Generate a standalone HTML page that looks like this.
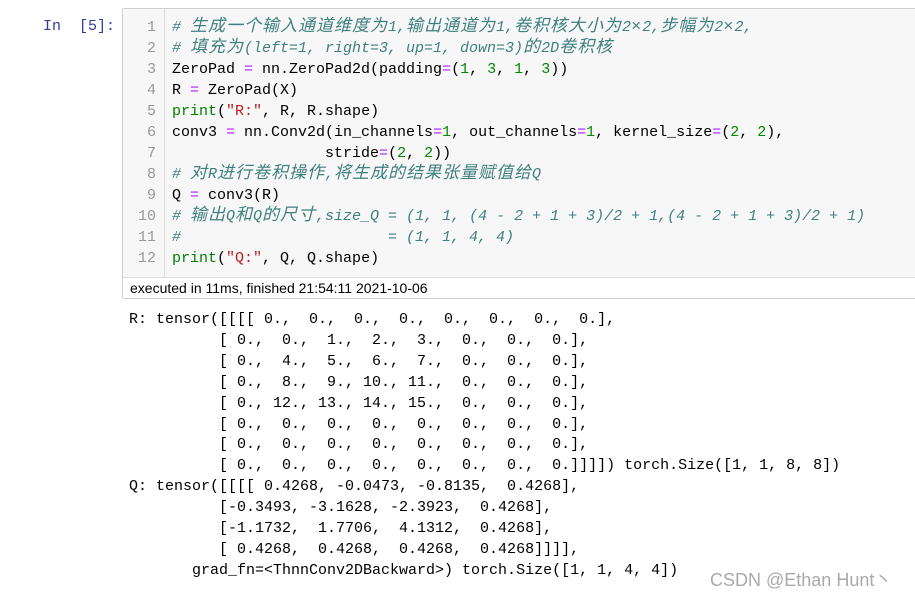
<!DOCTYPE html>
<html><head><meta charset="utf-8"><style>
body{margin:0;width:915px;height:596px;background:#fff;position:relative;overflow:hidden;font-family:"Liberation Mono","Noto Sans CJK SC",monospace;font-size:15px;}
.p{position:absolute;left:43px;top:16px;line-height:21px;color:#303f9f;white-space:pre;}
.cell{position:absolute;left:122px;top:8px;width:800px;height:289px;border:1px solid #cfcfcf;background:#f7f7f7;border-radius:2px;}
.gut{position:absolute;left:0;top:0;width:41px;height:268px;border-right:1px solid #ddd;background:#f7f7f7;}
.ln{position:absolute;left:0;width:33px;top:8px;text-align:right;line-height:21px;color:#999;white-space:pre;}
.code{position:absolute;left:49px;top:8px;line-height:21px;white-space:pre;color:#000;}
.foot{position:absolute;left:0;top:268px;width:100%;height:21px;border-top:1px solid #ddd;background:#fff;font-family:"Liberation Sans",sans-serif;font-size:14px;line-height:20px;padding-left:7px;box-sizing:border-box;color:#000;}
.c{font-size:17px;letter-spacing:1px;line-height:15px}
.cm{color:#408080;font-style:italic}
.o{color:#aa22ff}.n{color:#008800}.s{color:#ba2121}.b{color:#008000}
.out{position:absolute;left:129px;top:310px;line-height:20.9px;white-space:pre;color:#000;}
.wm{position:absolute;left:710px;top:566px;font-family:"Liberation Sans","Noto Sans CJK SC",sans-serif;font-size:18px;color:#a9a9a9;}
</style></head><body>
<div class="p">In  [5]:</div>
<div class="cell">
<div class="gut"><div class="ln">1
2
3
4
5
6
7
8
9
10
11
12</div></div>
<div class="code"><span class="cm"># <span class="c">生成一个输入通道维度为</span>1,<span class="c">输出通道为</span>1,<span class="c">卷积核大小为</span>2<span class="c">×</span>2,<span class="c">步幅为</span>2<span class="c">×</span>2,</span>
<span class="cm"># <span class="c">填充为</span>(left=1, right=3, up=1, down=3)<span class="c">的</span>2D<span class="c">卷积核</span></span>
ZeroPad <span class="o">=</span> nn.ZeroPad2d(padding<span class="o">=</span>(<span class="n">1</span>, <span class="n">3</span>, <span class="n">1</span>, <span class="n">3</span>))
R <span class="o">=</span> ZeroPad(X)
<span class="b">print</span>(<span class="s">"R:"</span>, R, R.shape)
conv3 <span class="o">=</span> nn.Conv2d(in_channels<span class="o">=</span><span class="n">1</span>, out_channels<span class="o">=</span><span class="n">1</span>, kernel_size<span class="o">=</span>(<span class="n">2</span>, <span class="n">2</span>),
                 stride<span class="o">=</span>(<span class="n">2</span>, <span class="n">2</span>))
<span class="cm"># <span class="c">对</span>R<span class="c">进行卷积操作</span>,<span class="c">将生成的结果张量赋值给</span>Q</span>
Q <span class="o">=</span> conv3(R)
<span class="cm"># <span class="c">输出</span>Q<span class="c">和</span>Q<span class="c">的尺寸</span>,size_Q = (1, 1, (4 - 2 + 1 + 3)/2 + 1,(4 - 2 + 1 + 3)/2 + 1)</span>
<span class="cm">#                       = (1, 1, 4, 4)</span>
<span class="b">print</span>(<span class="s">"Q:"</span>, Q, Q.shape)</div>
<div class="foot">executed in 11ms, finished 21:54:11 2021-10-06</div>
</div>
<div class="out">R: tensor([[[[ 0.,  0.,  0.,  0.,  0.,  0.,  0.,  0.],
          [ 0.,  0.,  1.,  2.,  3.,  0.,  0.,  0.],
          [ 0.,  4.,  5.,  6.,  7.,  0.,  0.,  0.],
          [ 0.,  8.,  9., 10., 11.,  0.,  0.,  0.],
          [ 0., 12., 13., 14., 15.,  0.,  0.,  0.],
          [ 0.,  0.,  0.,  0.,  0.,  0.,  0.,  0.],
          [ 0.,  0.,  0.,  0.,  0.,  0.,  0.,  0.],
          [ 0.,  0.,  0.,  0.,  0.,  0.,  0.,  0.]]]]) torch.Size([1, 1, 8, 8])
Q: tensor([[[[ 0.4268, -0.0473, -0.8135,  0.4268],
          [-0.3493, -3.1628, -2.3923,  0.4268],
          [-1.1732,  1.7706,  4.1312,  0.4268],
          [ 0.4268,  0.4268,  0.4268,  0.4268]]]],
       grad_fn=&lt;ThnnConv2DBackward&gt;) torch.Size([1, 1, 4, 4])</div>
<div class="wm">CSDN @Ethan Hunt丶</div>
</body></html>
